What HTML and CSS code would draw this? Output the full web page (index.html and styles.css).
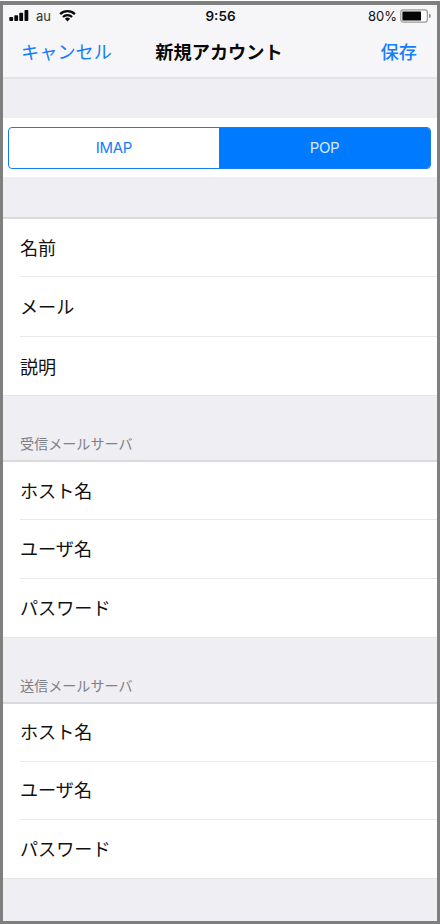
FILE: index.html
```html
<!DOCTYPE html>
<html lang="ja">
<head>
<meta charset="utf-8">
<title>新規アカウント</title>
<link rel="stylesheet" href="styles.css">
</head>
<body>
<div class="screen">
  <header class="top">
    <div class="status">
      <div class="carrier">
        <svg class="signal" width="20" height="14" viewBox="0 0 20 14">
          <g fill="#080808">
            <rect x="0.3" y="8" width="3.8" height="4" rx=".8"/>
            <rect x="5.3" y="6.2" width="3.8" height="5.8" rx=".8"/>
            <rect x="10.3" y="3.8" width="3.8" height="8.2" rx=".8"/>
            <rect x="15.5" y="1" width="3.8" height="11" rx=".8"/>
          </g>
        </svg>
        <span>au</span>
        <svg class="wifi" width="17" height="13" viewBox="0 0 17 13">
          <g fill="none" stroke="#080808" stroke-width="2.2">
            <path d="M1.1 5.1a10.6 10.6 0 0 1 14.8 0"/>
            <path d="M3.9 8a6.6 6.6 0 0 1 9.2 0"/>
          </g>
          <path fill="#080808" d="M5.9 9.8a3.8 3.8 0 0 1 5.2 0L8.5 12.4z"/>
        </svg>
      </div>
      <span class="time">9:56</span>
      <div class="power">
        <span>80%</span>
        <svg width="32" height="14" viewBox="0 0 32 14">
          <rect x=".8" y=".9" width="26.6" height="12.2" rx="2.6" fill="#fbfbfb" stroke="#999" stroke-width="1.2"/>
          <rect x="2.4" y="2.5" width="18.6" height="9" rx=".6" fill="#050505"/>
          <path d="M29 4.8q1.8.6 1.8 2.2T29 9.2z" fill="#888"/>
        </svg>
      </div>
    </div>
    <nav class="nav">
      <span class="cancel">キャンセル</span>
      <h1>新規アカウント</h1>
      <span class="save">保存</span>
    </nav>
  </header>
  <div class="switch">
    <div class="segments">
      <span class="segment">IMAP</span>
      <span class="segment selected">POP</span>
    </div>
  </div>
  <section class="group basic">
    <div class="row">名前</div>
    <div class="row">メール</div>
    <div class="row">説明</div>
  </section>
  <h2>受信メールサーバ</h2>
  <section class="group incoming">
    <div class="row">ホスト名</div>
    <div class="row">ユーザ名</div>
    <div class="row">パスワード</div>
  </section>
  <h2>送信メールサーバ</h2>
  <section class="group outgoing">
    <div class="row">ホスト名</div>
    <div class="row">ユーザ名</div>
    <div class="row">パスワード</div>
  </section>
</div>
</body>
</html>
```
FILE: styles.css
```css
* { box-sizing: border-box; }
body {
  margin: 0;
  padding-top: 1px;
  background: #fff;
  font-family: Inter, "Noto Sans CJK JP", sans-serif;
  color: #111;
}
.screen {
  height: 923px;
  border: 3px solid #7f7f7f;
  border-top-width: 4px;
  background: #eeeef3;
  overflow: hidden;
}
.top {
  height: 74px;
  background: #f6f6f8;
  border-bottom: 2px solid #e3e3e7;
}
.status {
  display: grid;
  grid-template-columns: 1fr auto 1fr;
  align-items: center;
  height: 21px;
  padding: 0 5px 0 6px;
  font-size: 13px;
  line-height: 20px;
}
.carrier, .power { display: flex; align-items: center; }
.signal { flex: none; }
.carrier span { margin-left: 7px; color: #333; width: 17px; }
.wifi { margin-left: 6px; }
.time { font-weight: 600; font-size: 13.5px; }
.power { justify-content: flex-end; gap: 3px; }
.power span { font-size: 13px; }
.nav {
  display: grid;
  grid-template-columns: 1fr auto 1fr;
  align-items: center;
  height: 52px;
  padding: 0 20px 0 18px;
  font-size: 18.2px;
  line-height: 26px;
  color: #147dfa;
}
h1 { margin: 0; font-size: 18.2px; font-weight: 700; line-height: 26px; color: #080808; }
.save { text-align: right; font-weight: 500; }
.switch {
  height: 59px;
  margin-top: 39px;
  padding: 9px 6px 8px 5px;
  background: #fff;
}
.segments {
  display: grid;
  grid-template-columns: 210px 1fr;
  height: 42px;
  border: 1px solid #187bea;
  border-radius: 4px;
  overflow: hidden;
}
.segment {
  font-size: 15px;
  letter-spacing: -.3px;
  line-height: 40px;
  text-align: center;
  color: #147dfa;
}
.selected { background: #007aff; color: #d9ecff; }
.group {
  display: grid;
  background: #fff;
  border-top: 2px solid #dadade;
  border-bottom: 1px solid #e6e6ea;
  padding-left: 17px;
  font-size: 18.1px;
}
.basic { height: 179px; margin-top: 40px; grid-template-rows: 58px 60px 58px; }
.incoming { height: 178px; grid-template-rows: 58px 59px 58px; }
.outgoing { height: 177px; grid-template-rows: 58px 58px 58px; }
.row {
  display: flex;
  align-items: center;
  padding-bottom: 2px;
  border-bottom: 1px solid #e9e9ec;
}
.row:last-child { border-bottom: 0; }
.basic .row:last-child { padding-bottom: 1px; }
.outgoing .row { padding-bottom: 3px; }
h2 {
  height: 64px;
  margin: 0;
  padding: 38px 0 0 17px;
  font-size: 14.1px;
  font-weight: 400;
  line-height: 20px;
  color: #808085;
}
```
